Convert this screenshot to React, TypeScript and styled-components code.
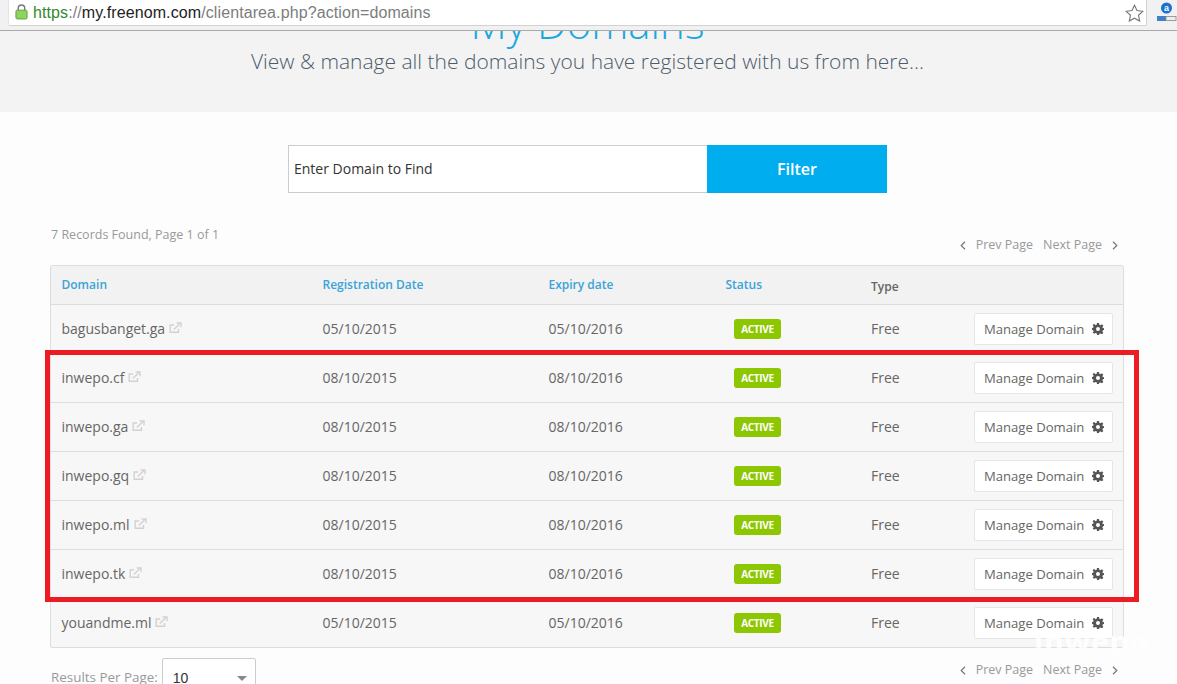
import React, { ReactElement } from 'react'
import styled, { createGlobalStyle } from 'styled-components'

const domains = [
  { name: 'bagusbanget.ga', reg: '05/10/2015', exp: '05/10/2016' },
  { name: 'inwepo.cf', reg: '08/10/2015', exp: '08/10/2016' },
  { name: 'inwepo.ga', reg: '08/10/2015', exp: '08/10/2016' },
  { name: 'inwepo.gq', reg: '08/10/2015', exp: '08/10/2016' },
  { name: 'inwepo.ml', reg: '08/10/2015', exp: '08/10/2016' },
  { name: 'inwepo.tk', reg: '08/10/2015', exp: '08/10/2016' },
  { name: 'youandme.ml', reg: '05/10/2015', exp: '05/10/2016' },
]

function LinkIcon(): ReactElement {
  return (
    <svg width="13" height="12" viewBox="0 0 13 12" fill="none" stroke="#d2d2d2" strokeWidth="1.4">
      <path d="M9.5 7v3.2H1.2V3h4" />
      <path d="M4.8 7.6 11 1.6" />
      <path d="M7.6 1h4.4v4.2" />
    </svg>
  )
}

function GearIcon(): ReactElement {
  return (
    <svg width="12" height="12" viewBox="0 0 24 24">
      <path
        fill="#555"
        fillRule="evenodd"
        d="M10 0h4l.7 3.4 2.3 1 2.9-1.9 2.8 2.8L20.8 8l.9 2.3L24 10v4l-2.3.7-.9 2.3 1.9 2.9-2.8 2.8-2.9-1.9-2.3.9L14 24h-4l-.7-3.3-2.3-.9-2.9 1.9-2.8-2.8L3.2 17l-.9-2.3L0 14v-4l2.3-.7.9-2.3-1.9-2.7 2.8-2.8L7 4.4l2.3-1zM12 8a4 4 0 1 0 0 8 4 4 0 0 0 0-8z"
      />
    </svg>
  )
}

function Chevron({ flip }: { flip?: boolean }): ReactElement {
  return (
    <svg width="6" height="9" viewBox="0 0 6 9" fill="none" stroke="#777" strokeWidth="1.2">
      <path d={flip ? 'M1 .8 4.8 4.5 1 8.2' : 'M5 .8 1.2 4.5 5 8.2'} />
    </svg>
  )
}

function Pager({ top }: { top: number }): ReactElement {
  return (
    <PagerWrap $top={top}>
      <Chevron />
      <span>Prev Page</span>
      <span>Next Page</span>
      <Chevron flip />
    </PagerWrap>
  )
}

export default function App(): ReactElement {
  return (
    <>
      <GlobalStyle />
      <Screen>
        <BrowserBar>
          <AddressField>
            <LockSlot>
              <svg width="13" height="16" viewBox="0 0 14 17">
                <path d="M3.5 7V4.5a3.5 3.5 0 0 1 7 0V7" fill="none" stroke="#777" strokeWidth="1.5" />
                <rect x="1" y="6.5" width="12" height="9.5" rx="1.5" fill="#8fd35f" stroke="#5f9a3a" />
              </svg>
            </LockSlot>
            <Url>
              <UrlScheme>https</UrlScheme>
              ://
              <UrlHost>my.freenom.com</UrlHost>
              /clientarea.php?action=domains
            </Url>
            <StarSlot>
              <svg width="19" height="18" viewBox="0 0 19 18" fill="#fff" stroke="#777" strokeWidth="1.1">
                <path d="M9.5 1.2l2.5 5.4 5.8.7-4.3 4 1.2 5.8-5.2-2.9-5.2 2.9 1.2-5.8-4.3-4 5.8-.7z" />
              </svg>
            </StarSlot>
          </AddressField>
          <ExtensionIcon>
            <svg width="20" height="23" viewBox="0 0 20 23">
              <circle cx="9.5" cy="8" r="5.5" fill="#1a6fd0" />
              <text x="9.5" y="11" fontSize="9" fontWeight="700" fontFamily="Liberation Sans" fill="#fff" textAnchor="middle">a</text>
              <rect x="0" y="16" width="9" height="5" fill="#3f7fc8" />
              <rect x="9" y="16.5" width="10" height="4" fill="#eee" stroke="#888" strokeWidth="0.8" />
            </svg>
          </ExtensionIcon>
        </BrowserBar>

        <Hero>
          <HeroTitle>My Domains</HeroTitle>
          <HeroText>View &amp; manage all the domains you have registered with us from here...</HeroText>
        </Hero>

        <Content>
          <SearchForm>
            <SearchInput placeholder="Enter Domain to Find" />
            <FilterButton>Filter</FilterButton>
          </SearchForm>

          <TopRow>
            <Records>7 Records Found, Page 1 of 1</Records>
            <Pager top={10} />
          </TopRow>

          <Table>
            <HeadRow>
              <HeadCell>Domain</HeadCell>
              <HeadCell>Registration Date</HeadCell>
              <HeadCell>Expiry date</HeadCell>
              <HeadCell>Status</HeadCell>
              <TypeHead>Type</TypeHead>
              <span />
            </HeadRow>
            {domains.map((d) => (
              <Row key={d.name}>
                <DomainCell>
                  {d.name}
                  <LinkIcon />
                </DomainCell>
                <TextCell>{d.reg}</TextCell>
                <TextCell>{d.exp}</TextCell>
                <StatusCell>
                  <Badge>ACTIVE</Badge>
                </StatusCell>
                <TextCell>Free</TextCell>
                <ManageButton>
                  Manage Domain
                  <GearIcon />
                </ManageButton>
              </Row>
            ))}
          </Table>

          <BottomRow>
            <PerPage>
              <PerPageLabel>Results Per Page:</PerPageLabel>
              <PerPageSelect>
                10
                <Caret />
              </PerPageSelect>
            </PerPage>
            <Pager top={4} />
          </BottomRow>
        </Content>

        <Highlight />
        <Watermark>inwepo</Watermark>
      </Screen>
    </>
  )
}

const GlobalStyle = createGlobalStyle`
html, body {
  margin: 0;
  padding: 0;
  height: 684px;
  overflow: hidden;
  background: #fdfdfd;
}
* {
  box-sizing: border-box;
}
`

const Screen = styled.div`
position: relative;
width: 1177px;
height: 684px;
overflow: hidden;
font-family: "Open Sans", sans-serif;
color: #666;
`

const BrowserBar = styled.div`
display: flex;
align-items: flex-start;
height: 31px;
padding-left: 8px;
background: #f1f1f1;
border-bottom: 1px solid #a9a9a9;
`

const AddressField = styled.div`
display: flex;
align-items: center;
gap: 8px;
width: 1139px;
height: 26px;
background: #fff;
border: 1px solid #d2d2d2;
border-top: none;
border-left: 1px solid #e4e4e4;
border-radius: 0 0 2px 2px;
`

const LockSlot = styled.span`
display: flex;
flex: none;
margin: -2px -6px 0 6px;
`

const Url = styled.span`
flex: 1;
padding-left: 3px;
font-family: "Liberation Sans", sans-serif;
font-size: 16px;
color: #7d7d7d;
letter-spacing: 0.1px;
`

const UrlScheme = styled.span`
color: #2f8a2c;
`

const UrlHost = styled.span`
color: #222;
`

const StarSlot = styled.span`
display: flex;
width: 21px;
margin-top: 1px;
`

const ExtensionIcon = styled.span`
display: flex;
margin-left: 10px;
`

const Hero = styled.header`
height: 81px;
overflow: hidden;
background: #f3f3f3;
text-align: center;
padding-right: 2px;
`

const HeroTitle = styled.h1`
margin: -30px 0 0;
height: 45px;
font-size: 42px;
line-height: 44px;
font-weight: 300;
color: #1ba7dd;
`

const HeroText = styled.p`
margin: 0;
font-size: 21px;
line-height: 30px;
font-weight: 300;
color: #4d5c6b;
`

const Content = styled.main`
width: 1175px;
padding: 33px 51px 0 50px;
`

const SearchForm = styled.div`
display: flex;
justify-content: center;
height: 48px;
margin-right: -51px;
margin-left: -50px;
`

const SearchInput = styled.input`
width: 419px;
height: 48px;
padding: 0 5px 2px;
border: 1px solid #ccc;
border-right: none;
outline: none;
background: #fff;
font-family: "Open Sans", sans-serif;
font-size: 14px;
&::placeholder {
  color: #333;
  opacity: 1;
}
`

const FilterButton = styled.button`
width: 180px;
height: 48px;
border: none;
background: #00aeef;
color: #fff;
font-family: "Open Sans", sans-serif;
font-size: 16px;
font-weight: 600;
`

const TopRow = styled.div`
display: flex;
justify-content: space-between;
align-items: flex-start;
height: 72px;
padding: 34px 0 0 1px;
`

const Records = styled.span`
font-size: 12.5px;
line-height: 16px;
color: #999;
`

const PagerWrap = styled.span<{ $top: number }>`
display: flex;
align-items: center;
gap: 10px;
margin-top: ${(p) => p.$top}px;
padding-right: 6px;
font-size: 12.5px;
line-height: 16px;
color: #999;
`

const Table = styled.section`
border: 1px solid #ddd;
border-radius: 2px;
background: #f7f7f7;
`

const gridColumns = `
display: grid;
grid-template-columns: 261px 226px 177px 145.5px 102.5px 139.5px;
align-items: center;
padding: 0 10px 0 10.5px;
`

const HeadRow = styled.div`
${gridColumns}
height: 39px;
background: #f2f2f2;
border-bottom: 1px solid #ddd;
`

const HeadCell = styled.span`
margin-top: -2px;
font-size: 12px;
font-weight: 600;
color: #3aa3d8;
`

const TypeHead = styled.span`
margin-top: 2px;
font-size: 12px;
font-weight: 600;
color: #666;
`

const Row = styled.div`
${gridColumns}
height: 49px;
border-bottom: 1px solid #ddd;
font-size: 14px;
color: #666;
&:last-child {
  height: 48px;
  border-bottom: none;
}
`

const TextCell = styled.span`
display: flex;
align-items: center;
margin-top: -2px;
`

const DomainCell = styled(TextCell)`
gap: 4px;
`

const StatusCell = styled.span`
display: flex;
`

const Badge = styled.span`
display: inline-flex;
align-items: center;
justify-content: center;
width: 47px;
height: 20px;
margin-left: 8.5px;
background: #8dc701;
border-radius: 3px;
color: #fff;
font-size: 10px;
font-weight: 700;
letter-spacing: -0.3px;
`

const ManageButton = styled.button`
display: flex;
align-items: center;
justify-content: space-between;
justify-self: end;
width: 139px;
height: 32px;
padding: 0 8px 0 9px;
border: 1px solid #e6e6e6;
border-radius: 2px;
background: #fff;
font-family: "Open Sans", sans-serif;
font-size: 13.1px;
color: #666;
`

const BottomRow = styled.div`
display: flex;
justify-content: space-between;
align-items: flex-start;
padding: 10px 0 0 1px;
`

const PerPage = styled.div`
display: flex;
gap: 4px;
`

const PerPageLabel = styled.span`
padding-top: 9px;
font-size: 13.4px;
line-height: 20px;
color: #999;
`

const PerPageSelect = styled.div`
display: flex;
align-items: center;
justify-content: space-between;
width: 94px;
height: 40px;
padding: 0 8px 0 10px;
border: 1px solid #ccc;
border-radius: 2px;
background: #fff;
font-family: "Liberation Sans", sans-serif;
font-size: 14px;
color: #333;
`

const Caret = styled.span`
width: 0;
height: 0;
border-left: 5px solid transparent;
border-right: 5px solid transparent;
border-top: 5px solid #888;
`

const Highlight = styled.div`
position: absolute;
left: 45px;
top: 350px;
width: 1094px;
height: 252px;
border: 5px solid #ed1c24;
pointer-events: none;
`

const Watermark = styled.div`
position: absolute;
left: 1034px;
top: 622px;
font-family: "Open Sans", sans-serif;
font-size: 30px;
line-height: 40px;
font-weight: 700;
letter-spacing: 0.8px;
color: rgba(255, 255, 255, 0.9);
`
